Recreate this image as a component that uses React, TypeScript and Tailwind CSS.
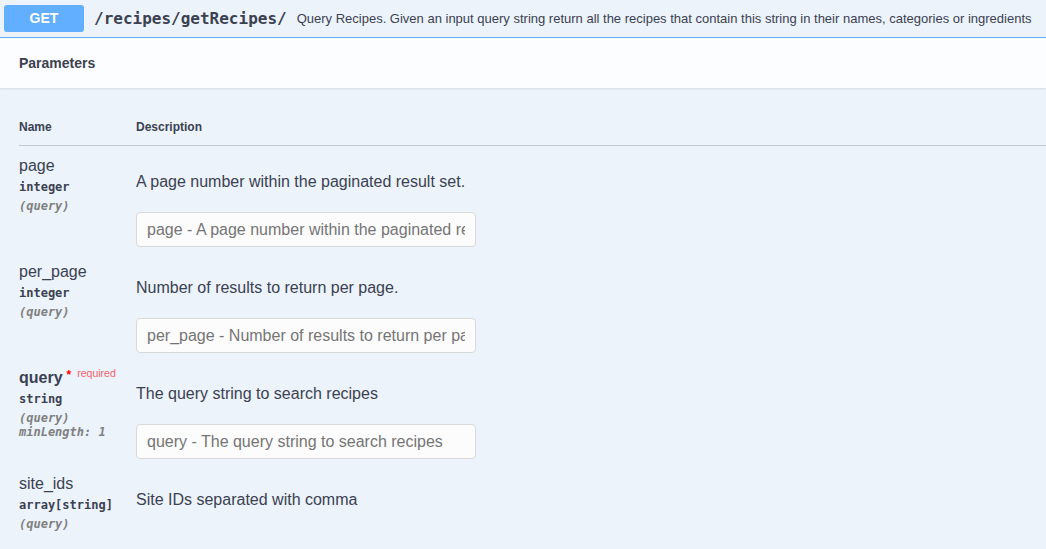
import React from "react";

type Param = {
  name: string;
  type: string;
  required?: boolean;
  extra?: string;
  description: string;
  placeholder?: string;
};

const params: Param[] = [
  {
    name: "page",
    type: "integer",
    description: "A page number within the paginated result set.",
    placeholder: "page - A page number within the paginated result set.",
  },
  {
    name: "per_page",
    type: "integer",
    description: "Number of results to return per page.",
    placeholder: "per_page - Number of results to return per page.",
  },
  {
    name: "query",
    type: "string",
    required: true,
    extra: "minLength: 1",
    description: "The query string to search recipes",
    placeholder: "query - The query string to search recipes",
  },
  {
    name: "site_ids",
    type: "array[string]",
    description: "Site IDs separated with comma",
  },
];

const sans = "font-['Liberation_Sans',Arial,sans-serif]";
const mono = "font-['DejaVu_Sans_Mono',monospace]";

function ParamRow({ p }: { p: Param }) {
  return (
    <div className="flex pt-[10px] pb-[5px]">
      <div className="w-[117px] shrink-0 pt-[1px]">
        <div
          className={`h-[18px] text-[16px] leading-[18px] ${
            p.required ? "font-bold" : ""
          } text-[#3b4151]`}
        >
          {p.name}
          {p.required && (
            <span className="relative -top-[4px] ml-[4px] text-[12px] leading-none text-[#ff0000]">
              *
              <span className="relative -top-[2px] ml-[6px] text-[10.5px] font-normal leading-none text-[#f5626a]">
                required
              </span>
            </span>
          )}
        </div>
        <div className={`${mono} py-[5px] text-[12px] font-bold leading-[14px] text-[#3b4151]`}>
          {p.type}
        </div>
        <div className={`${mono} text-[12px] italic font-bold leading-[14px] text-[#808080]`}>
          (query)
        </div>
        {p.extra && (
          <div className={`${mono} text-[12px] italic font-bold leading-[14px] text-[#808080]`}>
            {p.extra}
          </div>
        )}
      </div>
      <div className="flex-1">
        <p className="mt-[17px] text-[16px] leading-[18px] text-[#3b4151]">
          {p.description}
        </p>
        {p.placeholder && (
          <input
            type="text"
            placeholder={p.placeholder}
            className="mt-[21px] h-[35px] w-[340px] rounded-[4px] border border-[#d9d9d9] bg-[#fcfcfc] px-[10px] text-[16px] text-[#3b4151] placeholder:text-[#757575] focus:outline-none"
          />
        )}
      </div>
    </div>
  );
}

export default function App() {
  return (
    <div className={`${sans} h-[549px] w-[1046px] overflow-hidden bg-[#ecf3fb]`}>
      <div className="flex h-[38px] items-center border-b border-[#61affe] px-[4px]">
        <span className="flex h-[27px] w-[80px] items-center justify-center rounded-[3px] bg-[#61affe] text-[14px] font-bold text-white">
          GET
        </span>
        <span className={`${mono} ml-[10px] text-[16px] font-bold text-[#3b4151]`}>
          /recipes/getRecipes/
        </span>
        <span className="ml-[10px] whitespace-nowrap text-[13px] text-[#3b4151]">
          Query Recipes. Given an input query string return all the recipes that contain this string in their names, categories or ingredients
        </span>
      </div>
      <div className="flex h-[50px] items-center bg-[#fcfdff] px-[19px] shadow-[0_1px_2px_rgba(0,0,0,0.1)]">
        <h4 className="text-[14px] font-bold text-[#3b4151]">Parameters</h4>
      </div>
      <div className="pl-[19px] pt-[20px]">
        <div className="flex h-[38px] items-center border-b border-[#c4cad3] text-[12px] font-bold text-[#3b4151]">
          <div className="w-[117px]">Name</div>
          <div>Description</div>
        </div>
        {params.map((p) => (
          <ParamRow key={p.name} p={p} />
        ))}
      </div>
    </div>
  );
}
